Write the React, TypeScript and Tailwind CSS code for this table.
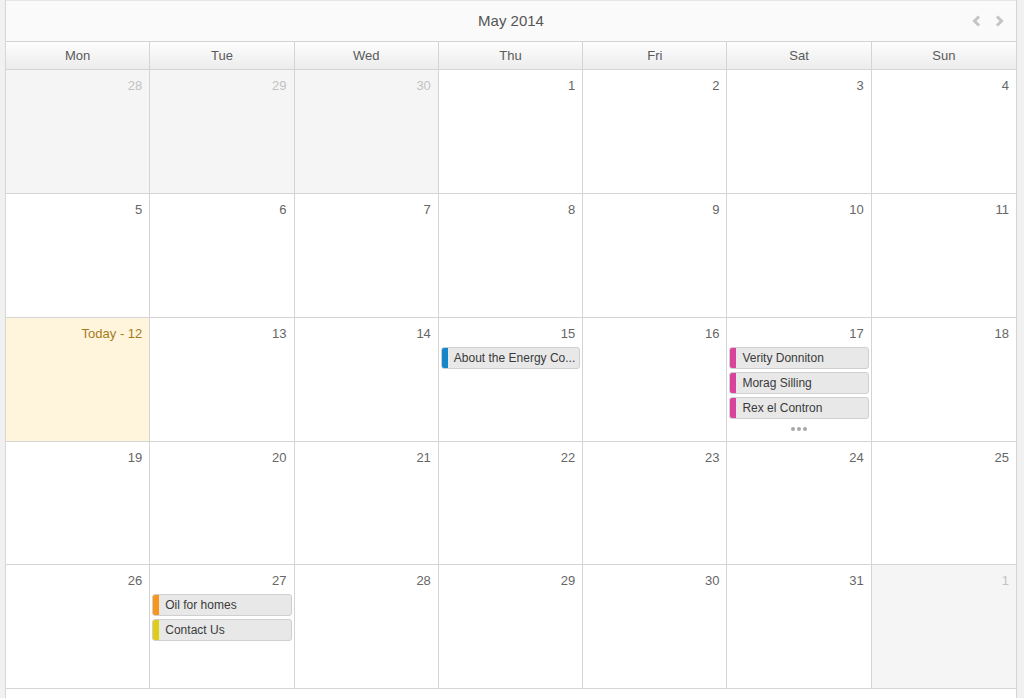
import React from 'react';

type CalEvent = { title: string; color: string };
type Day = { label: string; muted?: boolean; today?: boolean; events?: CalEvent[]; more?: boolean };

const weekdays = ['Mon', 'Tue', 'Wed', 'Thu', 'Fri', 'Sat', 'Sun'];

const weeks: Day[][] = [
  [
    { label: '28', muted: true },
    { label: '29', muted: true },
    { label: '30', muted: true },
    { label: '1' },
    { label: '2' },
    { label: '3' },
    { label: '4' },
  ],
  [{ label: '5' }, { label: '6' }, { label: '7' }, { label: '8' }, { label: '9' }, { label: '10' }, { label: '11' }],
  [
    { label: 'Today - 12', today: true },
    { label: '13' },
    { label: '14' },
    { label: '15', events: [{ title: 'About the Energy Co...', color: 'bg-[#1486c9]' }] },
    { label: '16' },
    {
      label: '17',
      events: [
        { title: 'Verity Donniton', color: 'bg-[#d9449b]' },
        { title: 'Morag Silling', color: 'bg-[#d9449b]' },
        { title: 'Rex el Contron', color: 'bg-[#d9449b]' },
      ],
      more: true,
    },
    { label: '18' },
  ],
  [{ label: '19' }, { label: '20' }, { label: '21' }, { label: '22' }, { label: '23' }, { label: '24' }, { label: '25' }],
  [
    { label: '26' },
    {
      label: '27',
      events: [
        { title: 'Oil for homes', color: 'bg-[#f7951e]' },
        { title: 'Contact Us', color: 'bg-[#e0cd17]' },
      ],
    },
    { label: '28' },
    { label: '29' },
    { label: '30' },
    { label: '31' },
    { label: '1', muted: true },
  ],
];

const Chevron: React.FC<{ dir: 'left' | 'right' }> = ({ dir }) => (
  <svg width="10" height="12" viewBox="0 0 10 12">
    <polyline
      points={dir === 'left' ? '7,1.5 2.5,6 7,10.5' : '3,1.5 7.5,6 3,10.5'}
      fill="none"
      stroke="#c4c4c4"
      strokeWidth="3"
    />
  </svg>
);

const App: React.FC = () => {
  return (
    <div className="w-[1024px] h-[698px] overflow-hidden bg-[#f1f1f1] pl-[5px] pr-[7px] font-['Liberation_Sans',Arial,sans-serif]">
      <div className="h-full bg-white border-x border-[#d6d6d6]">
        {/* title bar */}
        <div className="h-[41px] bg-[#fafafa] border-t border-[#e6e6e6] flex items-center justify-center relative">
          <span className="text-[15px] text-[#555]">May 2014</span>
          <div className="absolute right-[12px] top-[14px] flex gap-[12px]">
            <Chevron dir="left" />
            <Chevron dir="right" />
          </div>
        </div>

        {/* weekday header */}
        <div className="grid grid-cols-7 h-[29px] border-y border-[#d4d4d4] bg-gradient-to-b from-[#fdfdfd] to-[#ececec]">
          {weekdays.map((d, i) => (
            <div
              key={d}
              className={`flex items-center justify-center text-[13px] text-[#5a5a5a] ${i < 6 ? 'border-r border-[#d4d4d4]' : ''}`}
            >
              {d}
            </div>
          ))}
        </div>

        {/* weeks */}
        {weeks.map((week, wi) => (
          <div key={wi} className={`grid grid-cols-7 border-b border-[#d4d4d4] ${wi === 3 ? 'h-[123px]' : 'h-[124px]'}`}>
            {week.map((day, di) => (
              <div
                key={di}
                className={`flex flex-col pt-[8px] ${di < 6 ? 'border-r border-[#d4d4d4]' : ''} ${
                  day.today ? 'bg-[#fff5dc]' : day.muted ? 'bg-[#f5f5f5]' : 'bg-white'
                }`}
              >
                <div
                  className={`text-right pr-[7px] text-[13px] leading-[15px] ${
                    day.today ? 'text-[#a67c1e]' : day.muted ? 'text-[#c2c2c2]' : 'text-[#666]'
                  }`}
                >
                  {day.label}
                </div>
                {day.events && (
                  <div className="flex flex-col gap-[3px] mt-[6px] px-[2px]">
                    {day.events.map((ev, ei) => (
                      <div
                        key={ei}
                        className="flex h-[22px] rounded-[3px] border border-[#cfcfcf] bg-[#e8e8e8] overflow-hidden"
                      >
                        <div className={`w-[7px] ${ev.color} -my-px -ml-px`} />
                        <span className="pl-[6px] text-[12px] leading-[20px] text-[#3a3a3a] whitespace-nowrap">
                          {ev.title}
                        </span>
                      </div>
                    ))}
                  </div>
                )}
                {day.more && (
                  <div className="flex justify-center gap-[2px] mt-[8px]">
                    <span className="w-[4px] h-[4px] rounded-full bg-[#a8a8a8]" />
                    <span className="w-[4px] h-[4px] rounded-full bg-[#a8a8a8]" />
                    <span className="w-[4px] h-[4px] rounded-full bg-[#a8a8a8]" />
                  </div>
                )}
              </div>
            ))}
          </div>
        ))}
      </div>
    </div>
  );
};

export default App;
